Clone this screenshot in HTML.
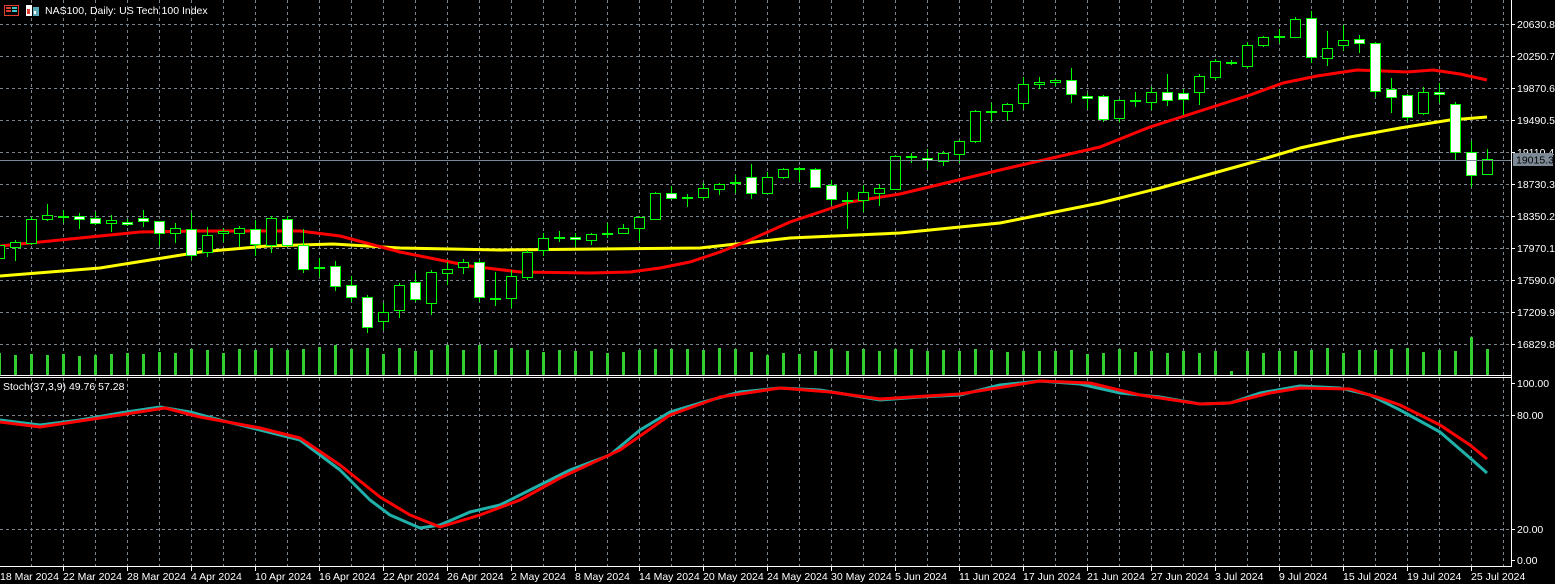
<!DOCTYPE html>
<html><head><meta charset="utf-8"><style>
html,body{margin:0;padding:0;background:#000;width:1555px;height:584px;overflow:hidden}
svg{display:block}
text{font-family:"Liberation Sans","DejaVu Sans",sans-serif;font-size:10.5px;fill:#fff}
</style></head><body>
<svg id="s" width="1555" height="584" xmlns="http://www.w3.org/2000/svg">
<g id="grid"></g>
<g id="vol"></g>
<g id="ma"></g>
<g id="cand"></g>
<g id="stoch"></g>
<line x1="0" y1="160.5" x2="1511" y2="160.5" stroke="#778899" stroke-width="1"/>
<line x1="0" y1="375.5" x2="1511" y2="375.5" stroke="#fff"/>
<line x1="0" y1="377.5" x2="1511" y2="377.5" stroke="#fff"/>
<line x1="0" y1="566.5" x2="1511" y2="566.5" stroke="#fff"/>
<line x1="1511.5" y1="0" x2="1511.5" y2="567" stroke="#fff"/>
<g id="ticks"></g>
<rect x="4.5" y="5.5" width="14" height="10" fill="none" stroke="#e04030"/>
<rect x="6" y="7" width="5" height="2" fill="#e04030"/><rect x="6" y="10" width="5" height="2" fill="#e04030"/>
<rect x="12" y="7" width="5" height="2" fill="#3cc8c8"/><rect x="12" y="10" width="5" height="2" fill="#3cc8c8"/>
<rect x="26" y="5" width="6" height="11" fill="#fff"/><rect x="27" y="9" width="3" height="5" fill="#e04030"/>
<rect x="33" y="7" width="6" height="9" fill="#5aaab8"/><rect x="34" y="11" width="2" height="3" fill="#fff"/>
<text x="45" y="14">NAS100, Daily:  US Tech 100 Index</text>
<text x="3" y="390">Stoch(37,3,9) 49.76 57.28</text>
<text x="1517" y="28">20630.8</text>
<text x="1517" y="60">20250.7</text>
<text x="1517" y="92">19870.6</text>
<text x="1517" y="124">19490.5</text>
<text x="1517" y="156">19110.4</text>
<rect x="1513" y="153" width="40" height="13" fill="#7d8a96"/>
<text x="1516" y="163.5" style="fill:#000">19015.3</text>
<text x="1517" y="188">18730.3</text>
<text x="1517" y="220">18350.2</text>
<text x="1517" y="252">17970.1</text>
<text x="1517" y="284">17590.0</text>
<text x="1517" y="316">17209.9</text>
<text x="1517" y="348">16829.8</text>
<text x="1517" y="387">100.00</text>
<text x="1517" y="419">80.00</text>
<text x="1517" y="533">20.00</text>
<text x="1517" y="564">0.00</text>
<g id="dates">
<text x="0" y="580">18 Mar 2024</text><text x="63" y="580">22 Mar 2024</text><text x="127" y="580">28 Mar 2024</text><text x="191" y="580">4 Apr 2024</text><text x="255" y="580">10 Apr 2024</text><text x="319" y="580">16 Apr 2024</text><text x="383" y="580">22 Apr 2024</text><text x="447" y="580">26 Apr 2024</text><text x="511" y="580">2 May 2024</text><text x="575" y="580">8 May 2024</text><text x="639" y="580">14 May 2024</text><text x="703" y="580">20 May 2024</text><text x="767" y="580">24 May 2024</text><text x="831" y="580">30 May 2024</text><text x="895" y="580">5 Jun 2024</text><text x="959" y="580">11 Jun 2024</text><text x="1023" y="580">17 Jun 2024</text><text x="1087" y="580">21 Jun 2024</text><text x="1151" y="580">27 Jun 2024</text><text x="1215" y="580">3 Jul 2024</text><text x="1279" y="580">9 Jul 2024</text><text x="1343" y="580">15 Jul 2024</text><text x="1407" y="580">19 Jul 2024</text><text x="1471" y="580">25 Jul 2024</text>
</g>
</svg>
<script>
var NS="http://www.w3.org/2000/svg";
function el(p,t,a){var e=document.createElementNS(NS,t);for(var k in a)e.setAttribute(k,a[k]);document.getElementById(p).appendChild(e);return e;}
var gc="#7a8590";
for(var x=31;x<1511;x+=32){el("grid","line",{x1:x+.5,y1:0,x2:x+.5,y2:375,stroke:gc,"stroke-dasharray":"3,3"});el("grid","line",{x1:x+.5,y1:378,x2:x+.5,y2:566,stroke:gc,"stroke-dasharray":"3,3"});}
for(var y=24;y<=344;y+=32){el("grid","line",{x1:0,y1:y+.5,x2:1511,y2:y+.5,stroke:gc,"stroke-dasharray":"3,3"});el("ticks","line",{x1:1511,y1:y+.5,x2:1515,y2:y+.5,stroke:"#fff"});}
[383,415,529,560].forEach(function(y){if(y==415||y==529)el("grid","line",{x1:0,y1:y+.5,x2:1511,y2:y+.5,stroke:gc,"stroke-dasharray":"3,3"});el("ticks","line",{x1:1511,y1:y+.5,x2:1515,y2:y+.5,stroke:"#fff"});});
for(var x=-1;x<1511;x+=64){el("ticks","line",{x1:x+.5,y1:566,x2:x+.5,y2:571,stroke:"#fff"});}
var C=[[245,258,243,262,0],[242,247,240,261,0],[219,243,217,245,0],[215,219,204,221,0],[216,217,210,223,0],[216,219,213,229,1],[218,223,212,225,1],[220,223,215,232,0],[222,224,219,226,1],[218,221,210,227,1],
[221,233,221,246,1],[228,233,223,243,0],[229,255,213,260,1],[235,252,227,257,0],[231,233,228,242,0],[228,233,226,247,0],[229,244,220,256,1],[218,245,216,253,0],[219,245,216,247,1],[245,269,229,273,1],
[267,268,258,277,0],[266,286,261,291,1],[285,297,276,302,1],[297,327,295,333,1],[312,321,303,330,0],[285,310,283,318,0],[282,299,273,302,1],[272,303,270,315,0],[269,273,262,285,0],[262,267,259,274,0],
[262,297,260,302,1],[298,299,272,306,0],[276,298,270,308,0],[252,277,250,280,0],[238,250,233,256,0],[237,238,231,242,0],[237,239,233,247,1],[234,240,233,245,0],[233,234,223,238,0],[228,233,224,234,0],
[217,228,216,241,0],[193,219,192,220,0],[193,198,186,198,1],[197,198,194,207,0],[188,197,183,200,0],[184,189,183,195,0],[182,183,175,193,0],[177,193,164,199,1],[177,193,172,193,0],[169,177,168,179,0],
[168,169,167,182,0],[169,187,168,188,1],[185,199,180,205,1],[200,201,192,229,0],[192,200,185,212,0],[188,193,184,206,0],[156,189,155,190,0],[156,157,153,163,0],[158,160,149,169,1],[153,161,151,166,0],
[141,154,140,163,0],[111,141,110,143,0],[111,112,103,121,0],[104,111,103,121,0],[84,103,77,109,0],[82,84,77,89,0],[80,82,79,86,0],[80,94,68,103,1],[96,98,93,109,1],[96,119,95,122,1],
[100,118,99,122,0],[100,101,92,107,1],[92,102,87,110,0],[92,100,74,106,1],[93,99,89,115,1],[76,92,74,105,0],[61,77,59,80,0],[62,63,60,65,0],[45,66,42,68,0],[37,45,36,47,0],
[36,37,29,43,0],[19,37,17,38,0],[18,57,11,63,1],[48,58,31,66,0],[40,45,25,51,0],[39,43,35,53,1],[43,91,42,97,1],[89,97,78,113,1],[95,117,94,121,1],[92,113,87,115,0],
[92,94,83,103,1],[104,152,102,161,1],[152,175,141,187,1],[159,174,149,175,0]];
var G="#00ff00";
var VH=[22,20,21,20,21,19,20,21,22,21,23,22,26,25,22,26,25,27,25,26,28,30,26,27,21,27,24,25,30,25,30,25,27,25,23,25,24,24,22,23,25,26,26,26,25,27,26,23,20,22,21,24,26,24,26,24,26,26,24,25,24,26,25,23,24,24,24,25,21,22,26,23,24,22,24,22,24,4,24,22,24,24,25,27,22,25,25,26,27,23,25,24,38,26];
C.forEach(function(c,i){var x=-1+16*i;
 el("cand","line",{x1:x+.5,y1:c[2],x2:x+.5,y2:c[3],stroke:G});
 var h=c[1]-c[0];
 if(h<=1){el("cand","rect",{x:x-5,y:c[0],width:11,height:2,fill:G});}
 else el("cand","rect",{x:x-4.5,y:c[0]+.5,width:10,height:h,fill:c[4]?"#fff":"#000",stroke:G});
 var vh=VH[i];
 el("vol","rect",{x:x-1,y:375-vh,width:3,height:vh,fill:"#32cd32"});
});
function pl(pts,col,w,g){el(g||"ma","polyline",{points:pts.map(function(p){return p.join(",")}).join(" "),fill:"none",stroke:col,"stroke-width":w,"stroke-linejoin":"round"});}
var Y=[[0,276],[100,268],[200,252],[267,246],[333,244],[400,248],[500,250],[600,249],[700,248],[790,238],[900,233],[1000,223],[1100,203],[1160,188],[1250,163],[1300,148],[1350,137],[1400,128],[1450,120],[1487,117]];
var R=[[0,246],[60,240],[100,236],[140,232],[200,231],[300,231],[340,236],[370,244],[400,252],[430,258],[470,266],[520,272],[590,273],[630,272],[660,268],[690,262],[720,252],[750,240],[790,222],[850,202],[900,194],[1000,170],[1100,147],[1150,127],[1250,95],[1283,83],[1317,76],[1357,70],[1383,71],[1407,72],[1433,70],[1460,74],[1487,80]];
pl(Y,"#ffff00",3);pl(R,"#ff0000",3);
var T=[[0,420],[40,425],[80,420],[120,413],[160,407],[190,412],[220,420],[260,430],[300,440],[340,470],[370,500],[390,515],[420,528],[440,525],[470,512],[500,505],[530,490],[570,470],[610,455],[640,430],[670,412],[700,403],[740,392],[780,388],[820,390],[880,400],[920,397],[960,395],[1000,385],[1040,381],[1080,384],[1120,393],[1160,397],[1200,404],[1230,403],[1260,393],[1300,386],[1340,388],[1370,395],[1400,410],[1440,432],[1470,458],[1487,473]];
var S=[[0,422],[40,427],[120,415],[165,408],[200,417],[260,428],[300,438],[340,465],[380,497],[410,515],[440,527],[480,515],[520,500],[560,478],[620,450],[670,415],[720,397],[780,388],[830,392],[880,399],[960,394],[1040,381],[1090,383],[1140,395],[1200,404],[1230,403],[1270,393],[1300,388],[1350,389],[1380,398],[1400,405],[1440,425],[1470,445],[1487,459]];
pl(T,"#20b2aa",3,"stoch");pl(S,"#ff0000",3,"stoch");
</script>
</body></html>
